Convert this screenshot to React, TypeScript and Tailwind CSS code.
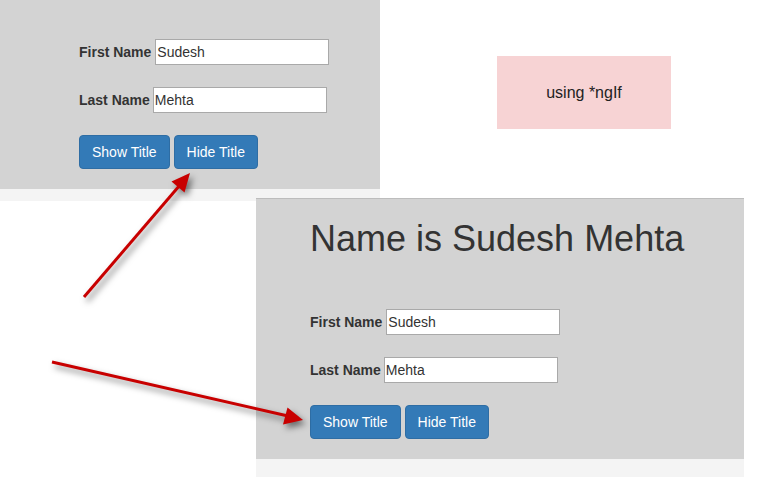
import React from "react";

const font = { fontFamily: '"Liberation Sans", Arial, sans-serif' };

function NameForm() {
  return (
    <div className="flex flex-col gap-[22px]">
      <div className="flex items-center gap-[4px] h-[26px]">
        <label className="text-[14px] font-bold text-[#333]">First Name</label>
        <input
          readOnly
          value="Sudesh"
          className="w-[174px] h-[26px] border border-[#a9a9a9] bg-white px-[1px] text-[14px] text-[#333] outline-none"
        />
      </div>
      <div className="flex items-center gap-[3px] h-[26px]">
        <label className="text-[14px] font-bold text-[#333]">Last Name</label>
        <input
          readOnly
          value="Mehta"
          className="w-[174px] h-[26px] border border-[#a9a9a9] bg-white px-[1px] text-[14px] text-[#333] outline-none"
        />
      </div>
      <div className="flex gap-[4px]">
        <button className="h-[34px] px-[12px] rounded-[4px] bg-[#337ab7] border border-[#2e6da4] text-white text-[14px]">
          Show Title
        </button>
        <button className="h-[34px] px-[12px] rounded-[4px] bg-[#337ab7] border border-[#2e6da4] text-white text-[14px]">
          Hide Title
        </button>
      </div>
    </div>
  );
}

export default function App() {
  return (
    <div className="relative w-[759px] h-[477px] bg-white overflow-hidden" style={font}>
      {/* top-left screenshot */}
      <div className="absolute left-0 top-0 w-[380px] flex flex-col">
        <div className="h-[189px] bg-[#d3d3d3] pl-[79px] pt-[39px]">
          <NameForm />
        </div>
        <div className="h-[12px] bg-[#f4f4f4]" />
      </div>

      {/* pink box */}
      <div className="absolute left-[497px] top-[56px] w-[174px] h-[73px] bg-[#f7d3d4] flex items-center justify-center text-[16px] text-[#222]">
        using *ngIf
      </div>

      {/* bottom screenshot */}
      <div className="absolute left-[256px] top-[198px] w-[488px] flex flex-col">
        <div className="h-[261px] bg-[#d3d3d3] border-t border-[#bdbdbd] pl-[54px]">
          <h1 className="mt-[20px] h-[40px] leading-[40px] text-[36px] text-[#333]">Name is Sudesh Mehta</h1>
          <div className="mt-[50px]">
            <NameForm />
          </div>
        </div>
        <div className="h-[18px] bg-[#f4f4f4]" />
      </div>

      {/* arrows */}
      <svg
        className="absolute inset-0 pointer-events-none"
        width="759"
        height="477"
        viewBox="0 0 759 477"
        style={{ filter: "drop-shadow(3px 4px 3px rgba(0,0,0,0.5))" }}
      >
        <line x1="84" y1="297" x2="180" y2="185" stroke="#c80000" strokeWidth="3" />
        <polygon points="190,173 184.5,192.5 171.5,181.5" fill="#c80000" />
        <line x1="52" y1="362" x2="288" y2="416" stroke="#c80000" strokeWidth="3" />
        <polygon points="303,420 283,424.5 287.5,407.5" fill="#c80000" />
      </svg>
    </div>
  );
}
